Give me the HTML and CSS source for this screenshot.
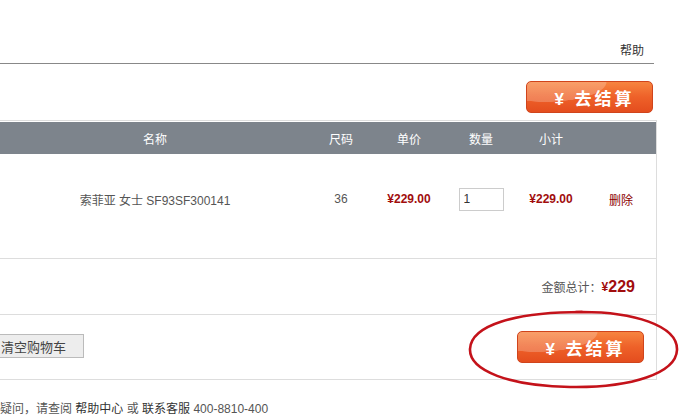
FILE: index.html
```html
<!DOCTYPE html>
<html lang="zh-CN">
  <head>
    <meta charset="UTF-8" />
    <meta name="viewport" content="width=device-width, initial-scale=1.0" />
    <title>购物车</title>
    <link rel="stylesheet" href="styles.css">
  </head>
  <body>
    <div class="topbar">
      <a class="help" href="#">帮助</a>
    </div>
    <div class="actions-top">
      <button class="checkout">¥ 去结算</button>
    </div>
    <div class="cart">
      <table class="cart-table">
        <thead>
          <tr>
            <th class="col-name">名称</th>
            <th class="col-size">尺码</th>
            <th class="col-price">单价</th>
            <th class="col-qty">数量</th>
            <th class="col-sum">小计</th>
            <th class="col-op"></th>
          </tr>
        </thead>
        <tbody>
          <tr class="item">
            <td class="col-name">索菲亚 女士 SF93SF300141</td>
            <td class="col-size">36</td>
            <td class="col-price price">¥229.00</td>
            <td class="col-qty"><input class="qty" type="text" value="1"></td>
            <td class="col-sum price">¥229.00</td>
            <td class="col-op"><a class="remove" href="#">删除</a></td>
          </tr>
        </tbody>
      </table>
      <div class="total">
        金额总计：<span class="yen">¥</span><span class="amount">229</span>
      </div>
      <div class="actions">
        <button class="clear">清空购物车</button>
        <button class="checkout">¥ 去结算</button>
        <!-- hand drawn circle round the checkout button -->
        <svg class="mark" width="220" height="84" viewBox="0 0 220 84">
          <path d="M112 4 C170 3 214 18 213 42 C212 65 168 80 106 79 C46 78 5 63 6 41 C7 17 52 4 118 4"
                fill="none" stroke="#c4121a" stroke-width="2.6" stroke-linecap="round"/>
        </svg>
      </div>
    </div>
    <p class="footer">疑问，请查阅 <a href="#">帮助中心</a> 或 <a href="#">联系客服</a> 400-8810-400</p>
  </body>
</html>
```

FILE: styles.css
```css
body {
  margin: 0;
  overflow: hidden;
  font-family: "Liberation Sans", "Noto Sans CJK SC", sans-serif;
  font-size: 12px;
  color: #555;
  background: #fff;
}
a {
  text-decoration: none;
}
.topbar {
  width: 654px;
  height: 63px;
  border-bottom: 1px solid #888;
  display: flex;
  justify-content: flex-end;
  align-items: flex-end;
}
.help {
  color: #333;
  padding: 0 10px 5px 0;
  line-height: 14px;
}
.actions-top {
  width: 653px;
  display: flex;
  justify-content: flex-end;
  margin-top: 17px;
}
/* orange checkout button, gloss on the upper left */
.checkout {
  width: 127px;
  height: 32px;
  padding: 0 0 0 10px;
  border: 1px solid #d0441c;
  border-radius: 5px;
  background:
    radial-gradient(ellipse 62px 20px at 18px 0, rgba(255, 255, 255, 0.22) 98%, rgba(255, 255, 255, 0) 100%),
    linear-gradient(#f7843f, #ee6129 50%, #e44d1e);
  color: #fff;
  font-family: "Liberation Sans", "Noto Sans CJK SC", sans-serif;
  font-size: 17px;
  font-weight: bold;
  letter-spacing: 3px;
  cursor: pointer;
}
.cart {
  width: 656px;
  margin-top: 7px;
  border-top: 1px solid #ddd;
  border-right: 1px solid #ddd;
  padding-top: 1px;
}
.cart-table {
  width: 656px;
  border-collapse: collapse;
  table-layout: fixed;
}
.cart-table th {
  height: 32px;
  padding: 0;
  background: #7d848c;
  color: #fff;
  font-weight: normal;
}
.cart-table td {
  height: 90px;
  padding: 0 0 14px;
  text-align: center;
  border-bottom: 1px solid #ddd;
}
.col-name { width: 310px; }
.col-size { width: 62px; }
.col-price { width: 74px; }
.col-qty { width: 70px; }
.col-sum { width: 70px; }
.col-op { width: 70px; }
.price {
  color: #a10d0d;
  font-weight: bold;
}
.qty {
  box-sizing: border-box;
  width: 45px;
  height: 23px;
  padding: 0 4px;
  border: 1px solid #ccc;
  font-family: "Liberation Sans", sans-serif;
  font-size: 12px;
  color: #333;
}
.remove {
  color: #8b0000;
}
.total {
  height: 55px;
  border-bottom: 1px solid #ddd;
  display: flex;
  justify-content: flex-end;
  align-items: center;
  padding-right: 21px;
  color: #555;
}
.yen {
  color: #a10d0d;
  font-weight: bold;
}
.amount {
  color: #a10d0d;
  font-size: 16px;
  font-weight: bold;
}
.actions {
  position: relative;
  height: 64px;
  border-bottom: 1px solid #ddd;
  display: flex;
  justify-content: space-between;
  align-items: center;
  padding-right: 12px;
}
.clear {
  margin-left: -14px;
  margin-top: -2px;
  height: 24px;
  padding: 0 17px 0 14px;
  border: 1px solid #bbb;
  background: #ededed;
  color: #444;
  font-family: "Liberation Sans", "Noto Sans CJK SC", sans-serif;
  font-size: 13px;
}
.mark {
  position: absolute;
  left: 464px;
  top: -7px;
}
.footer {
  margin: 19px 0 0;
  color: #555;
}
.footer a {
  color: #333;
}
```
